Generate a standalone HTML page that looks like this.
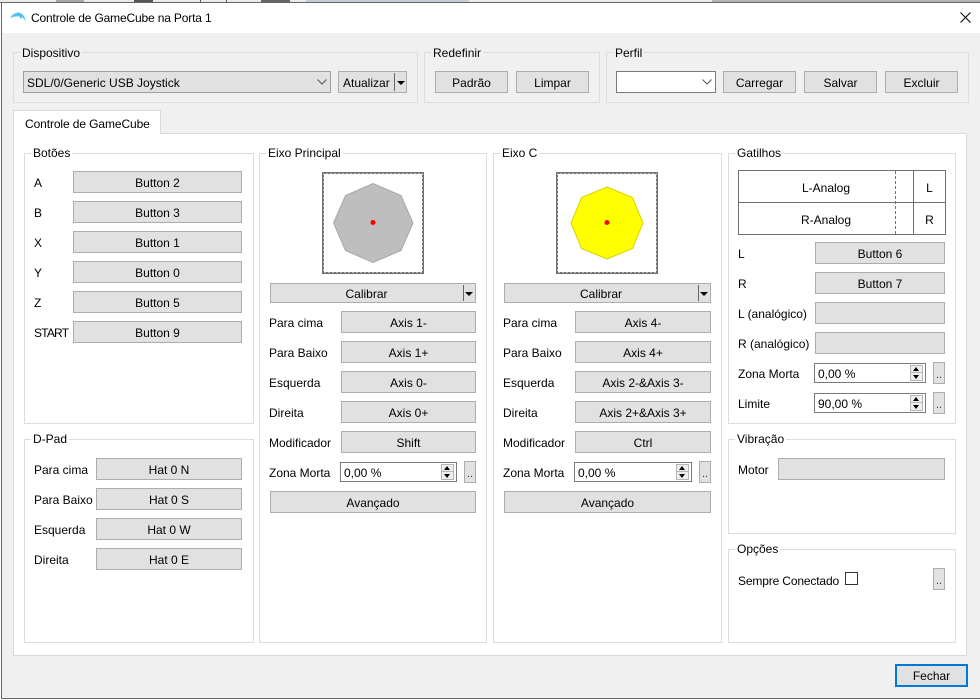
<!DOCTYPE html>
<html lang="pt">
<head>
<meta charset="utf-8">
<title>Controle de GameCube na Porta 1</title>
<style>
html,body{margin:0;padding:0;background:#f0f0f0}
body{position:relative;width:980px;height:700px;overflow:hidden;font-family:"Liberation Sans",sans-serif;font-size:12px;color:#000}
div,span{box-sizing:border-box}
.a{position:absolute}
.g{position:absolute;border:1px solid #dcdcdc}
.t{position:absolute;padding:0 2px;line-height:14px;height:14px;white-space:nowrap}
.w{background:#fff}
.f{background:#f0f0f0}
.b{position:absolute;height:22px;background:#e1e1e1;border:1px solid #adadad;text-align:center;line-height:22px;white-space:nowrap}
.l{position:absolute;height:22px;line-height:24px;white-space:nowrap}
.d{position:absolute;width:12px;height:22px;background:#e1e1e1;border:1px solid #adadad;text-align:center;line-height:24px;font-size:11px;color:#333}
.s{position:absolute;height:20px;background:#fff;border:1px solid #7a7a7a;line-height:20px;padding-left:3px;white-space:nowrap}
.u{position:absolute;right:2px;top:1px;width:13px;height:16px;background:#efefef;border:1px solid #b5b5b5}
.u:before{content:"";position:absolute;left:2px;top:1px;border-left:3.5px solid transparent;border-right:3.5px solid transparent;border-bottom:4px solid #000}
.u:after{content:"";position:absolute;left:2px;top:9px;border-left:3.5px solid transparent;border-right:3.5px solid transparent;border-top:4px solid #000}
.u i{position:absolute;left:0;right:0;top:6px;height:1px;background:#b5b5b5}
.c{position:absolute;height:20px;background:#e1e1e1;border:1px solid #adadad;text-align:center;line-height:20px;padding-right:13px}
.c i{position:absolute;right:11px;top:1px;bottom:1px;width:1px;background:#666}
.c b{position:absolute;right:2px;top:8px;border-left:4px solid transparent;border-right:4px solid transparent;border-top:4px solid #000}
</style>
</head>
<body>
<!-- behind window -->
<div class="a" style="left:0;top:0;width:980px;height:3px;background:#e9e9e9"></div>
<div class="a" style="left:56px;top:0;width:28px;height:3px;background:#a8a8a8"></div>
<div class="a" style="left:134px;top:0;width:19px;height:3px;background:#555"></div>
<div class="a" style="left:200px;top:0;width:1px;height:3px;background:#555"></div>
<div class="a" style="left:226px;top:0;width:1px;height:3px;background:#555"></div>
<div class="a" style="left:261px;top:0;width:29px;height:3px;background:#666"></div>
<div class="a" style="left:306px;top:0;width:163px;height:3px;background:#c4ccd6"></div>
<div class="a" style="left:712px;top:0;width:268px;height:3px;background:#b4b4b4"></div>
<div class="a" style="left:0;top:2px;width:980px;height:1px;background:#666"></div>
<div class="a" style="left:0;top:3px;width:2px;height:697px;background:#fff;border-right:1px solid #666"></div>
<div class="a" style="left:1px;top:698px;width:979px;height:1px;background:#666"></div>
<div class="a w" style="left:1px;top:699px;width:979px;height:1px"></div>

<!-- title bar -->
<div class="a w" style="left:2px;top:3px;width:978px;height:30px"></div>
<svg class="a" style="left:10px;top:12px" width="16" height="10" viewBox="0 0 16 10"><path d="M0 6C2 3 4 1.500 6 1 8 0 10 .5 12 2c2 1.500 3 4 4 7.500-1.500-2-2.500-3.500-4-4.500-.3 1-.8 1.700-1.500 2.200 0-1.200-.5-2-1.200-2.700C7 4 3 4.500 0 6z" fill="#4cc2f1"/></svg>
<div class="l" style="left:31px;top:6px;letter-spacing:-.16px">Controle de GameCube na Porta 1</div>
<svg class="a" style="left:960px;top:12px" width="11" height="11" viewBox="0 0 11 11"><path d="M.5.500l10 10M10.500.5l-10 10" stroke="#000" stroke-width="1" fill="none"/></svg>

<!-- top groups -->
<div class="g" style="left:13px;top:52px;width:405px;height:51px"></div>
<div class="t f" style="left:20px;top:46px">Dispositivo</div>
<div class="b" style="left:23px;top:71px;width:308px;text-align:left;padding-left:3px;border-color:#a0a0a0">SDL/0/Generic USB Joystick</div>
<svg class="a" style="left:317px;top:79px" width="10" height="6" viewBox="0 0 10 6"><path d="M.5.500L5 5 9.500.5" stroke="#555" fill="none"/></svg>
<div class="b" style="left:338px;top:71px;width:69px;text-align:left;padding-left:4px">Atualizar</div>
<div class="a" style="left:394px;top:73px;width:1px;height:18px;background:#666"></div>
<div class="a" style="left:397px;top:81px;border-left:4px solid transparent;border-right:4px solid transparent;border-top:4px solid #000"></div>

<div class="g" style="left:424px;top:52px;width:176px;height:51px"></div>
<div class="t f" style="left:431px;top:46px">Redefinir</div>
<div class="b" style="left:435px;top:71px;width:73px">Padrão</div>
<div class="b" style="left:516px;top:71px;width:73px">Limpar</div>

<div class="g" style="left:606px;top:52px;width:363px;height:51px"></div>
<div class="t f" style="left:613px;top:46px">Perfil</div>
<div class="a w" style="left:616px;top:71px;width:100px;height:22px;border:1px solid #7a7a7a"></div>
<svg class="a" style="left:702px;top:79px" width="10" height="6" viewBox="0 0 10 6"><path d="M.5.500L5 5 9.500.5" stroke="#555" fill="none"/></svg>
<div class="b" style="left:723px;top:71px;width:73px">Carregar</div>
<div class="b" style="left:804px;top:71px;width:73px">Salvar</div>
<div class="b" style="left:885px;top:71px;width:73px">Excluir</div>

<!-- tab pane -->
<div class="a w" style="left:13px;top:133px;width:954px;height:523px;border:1px solid #d9d9d9"></div>
<div class="a w" style="left:13px;top:110px;width:148px;height:24px;border:1px solid #d9d9d9;border-bottom:0;line-height:26px;padding-left:11px;letter-spacing:-.1px">Controle de GameCube</div>

<!-- Botões -->
<div class="g" style="left:24px;top:153px;width:230px;height:271px"></div>
<div class="t w" style="left:31px;top:146px">Botões</div>
<div class="l" style="left:34px;top:171px">A</div><div class="b" style="left:73px;top:171px;width:169px">Button 2</div>
<div class="l" style="left:34px;top:201px">B</div><div class="b" style="left:73px;top:201px;width:169px">Button 3</div>
<div class="l" style="left:34px;top:231px">X</div><div class="b" style="left:73px;top:231px;width:169px">Button 1</div>
<div class="l" style="left:34px;top:261px">Y</div><div class="b" style="left:73px;top:261px;width:169px">Button 0</div>
<div class="l" style="left:34px;top:291px">Z</div><div class="b" style="left:73px;top:291px;width:169px">Button 5</div>
<div class="l" style="left:34px;top:321px;letter-spacing:-.8px">START</div><div class="b" style="left:73px;top:321px;width:169px">Button 9</div>

<!-- D-Pad -->
<div class="g" style="left:24px;top:439px;width:230px;height:204px"></div>
<div class="t w" style="left:31px;top:432px">D-Pad</div>
<div class="l" style="left:34px;top:458px">Para cima</div><div class="b" style="left:96px;top:458px;width:146px">Hat 0 N</div>
<div class="l" style="left:34px;top:488px">Para Baixo</div><div class="b" style="left:96px;top:488px;width:146px">Hat 0 S</div>
<div class="l" style="left:34px;top:518px">Esquerda</div><div class="b" style="left:96px;top:518px;width:146px">Hat 0 W</div>
<div class="l" style="left:34px;top:548px">Direita</div><div class="b" style="left:96px;top:548px;width:146px">Hat 0 E</div>

<!-- Eixo Principal -->
<div class="g" style="left:259px;top:153px;width:228px;height:490px"></div>
<div class="t w" style="left:266px;top:146px">Eixo Principal</div>
<svg class="a" style="left:322px;top:172px" width="102" height="102" viewBox="0 0 102 102"><rect x=".5" y=".5" width="101" height="101" fill="#fff" stroke="#707070"/><rect x="1.500" y="1.500" width="99" height="99" fill="none" stroke="#707070" stroke-dasharray="3 1"/><polygon points="51,11.500 79,23.500 91,51 79,78.500 51,90.500 23.500,78.500 11.500,51 23.500,23.500" fill="#bebebe" stroke="#a8a8a8"/><circle cx="51" cy="50.500" r="2.500" fill="#f00"/></svg>
<div class="c" style="left:270px;top:283px;width:206px">Calibrar<i></i><b></b></div>
<div class="l" style="left:269px;top:311px">Para cima</div><div class="b" style="left:341px;top:311px;width:135px">Axis 1-</div>
<div class="l" style="left:269px;top:341px">Para Baixo</div><div class="b" style="left:341px;top:341px;width:135px">Axis 1+</div>
<div class="l" style="left:269px;top:371px">Esquerda</div><div class="b" style="left:341px;top:371px;width:135px">Axis 0-</div>
<div class="l" style="left:269px;top:401px">Direita</div><div class="b" style="left:341px;top:401px;width:135px">Axis 0+</div>
<div class="l" style="left:269px;top:431px">Modificador</div><div class="b" style="left:341px;top:431px;width:135px">Shift</div>
<div class="l" style="left:269px;top:461px">Zona Morta</div>
<div class="s" style="left:340px;top:462px;width:117px">0,00 %<span class="u"><i></i></span></div>
<div class="d" style="left:464px;top:461px">..</div>
<div class="b" style="left:270px;top:491px;width:206px">Avançado</div>

<!-- Eixo C -->
<div class="g" style="left:493px;top:153px;width:229px;height:490px"></div>
<div class="t w" style="left:500px;top:146px">Eixo C</div>
<svg class="a" style="left:556px;top:172px" width="102" height="102" viewBox="0 0 102 102"><rect x=".5" y=".5" width="101" height="101" fill="#fff" stroke="#707070"/><rect x="1.500" y="1.500" width="99" height="99" fill="none" stroke="#707070" stroke-dasharray="3 1"/><polygon points="51,15 76.500,25.500 87,51 76.500,76.500 51,87 25.500,76.500 15,51 25.500,25.500" fill="#ff0" stroke="#d4d400"/><circle cx="51" cy="50.500" r="2.500" fill="#f00"/></svg>
<div class="c" style="left:504px;top:283px;width:207px">Calibrar<i></i><b></b></div>
<div class="l" style="left:503px;top:311px">Para cima</div><div class="b" style="left:575px;top:311px;width:136px">Axis 4-</div>
<div class="l" style="left:503px;top:341px">Para Baixo</div><div class="b" style="left:575px;top:341px;width:136px">Axis 4+</div>
<div class="l" style="left:503px;top:371px">Esquerda</div><div class="b" style="left:575px;top:371px;width:136px">Axis 2-&amp;Axis 3-</div>
<div class="l" style="left:503px;top:401px">Direita</div><div class="b" style="left:575px;top:401px;width:136px">Axis 2+&amp;Axis 3+</div>
<div class="l" style="left:503px;top:431px">Modificador</div><div class="b" style="left:575px;top:431px;width:136px">Ctrl</div>
<div class="l" style="left:503px;top:461px">Zona Morta</div>
<div class="s" style="left:574px;top:462px;width:118px">0,00 %<span class="u"><i></i></span></div>
<div class="d" style="left:699px;top:461px">..</div>
<div class="b" style="left:504px;top:491px;width:207px">Avançado</div>

<!-- Gatilhos -->
<div class="g" style="left:728px;top:153px;width:228px;height:271px"></div>
<div class="t w" style="left:735px;top:146px">Gatilhos</div>
<div class="a" style="left:738px;top:170px;width:208px;height:65px;border:1px solid #707070"></div>
<div class="a" style="left:738px;top:202px;width:208px;height:1px;background:#707070"></div>
<div class="a" style="left:913px;top:170px;width:1px;height:65px;background:#707070"></div>
<div class="a" style="left:895px;top:171px;width:0;height:63px;border-left:1px dashed #707070"></div>
<div class="a" style="left:739px;top:171px;width:174px;height:31px;text-align:center;line-height:34px">L-Analog</div>
<div class="a" style="left:739px;top:203px;width:174px;height:31px;text-align:center;line-height:34px">R-Analog</div>
<div class="a" style="left:914px;top:171px;width:31px;height:31px;text-align:center;line-height:34px">L</div>
<div class="a" style="left:914px;top:203px;width:31px;height:31px;text-align:center;line-height:34px">R</div>
<div class="l" style="left:738px;top:242px">L</div><div class="b" style="left:815px;top:242px;width:130px">Button 6</div>
<div class="l" style="left:738px;top:272px">R</div><div class="b" style="left:815px;top:272px;width:130px">Button 7</div>
<div class="l" style="left:738px;top:302px">L (analógico)</div><div class="b" style="left:815px;top:302px;width:130px"></div>
<div class="l" style="left:738px;top:332px">R (analógico)</div><div class="b" style="left:815px;top:332px;width:130px"></div>
<div class="l" style="left:738px;top:362px">Zona Morta</div>
<div class="s" style="left:814px;top:363px;width:112px">0,00 %<span class="u"><i></i></span></div>
<div class="d" style="left:933px;top:362px">..</div>
<div class="l" style="left:738px;top:392px">Limite</div>
<div class="s" style="left:814px;top:393px;width:112px">90,00 %<span class="u"><i></i></span></div>
<div class="d" style="left:933px;top:392px">..</div>

<!-- Vibração -->
<div class="g" style="left:728px;top:439px;width:228px;height:95px"></div>
<div class="t w" style="left:735px;top:432px">Vibração</div>
<div class="l" style="left:738px;top:458px">Motor</div><div class="b" style="left:778px;top:458px;width:167px"></div>

<!-- Opções -->
<div class="g" style="left:728px;top:549px;width:228px;height:94px"></div>
<div class="t w" style="left:735px;top:542px">Opções</div>
<div class="l" style="left:738px;top:569px;letter-spacing:-.15px">Sempre Conectado</div>
<div class="a w" style="left:845px;top:572px;width:13px;height:13px;border:1px solid #333"></div>
<div class="d" style="left:933px;top:568px">..</div>

<!-- Fechar -->
<div class="b" style="left:895px;top:664px;width:73px;border:2px solid #0078d7;line-height:21px;height:23px">Fechar</div>
</body>
</html>
